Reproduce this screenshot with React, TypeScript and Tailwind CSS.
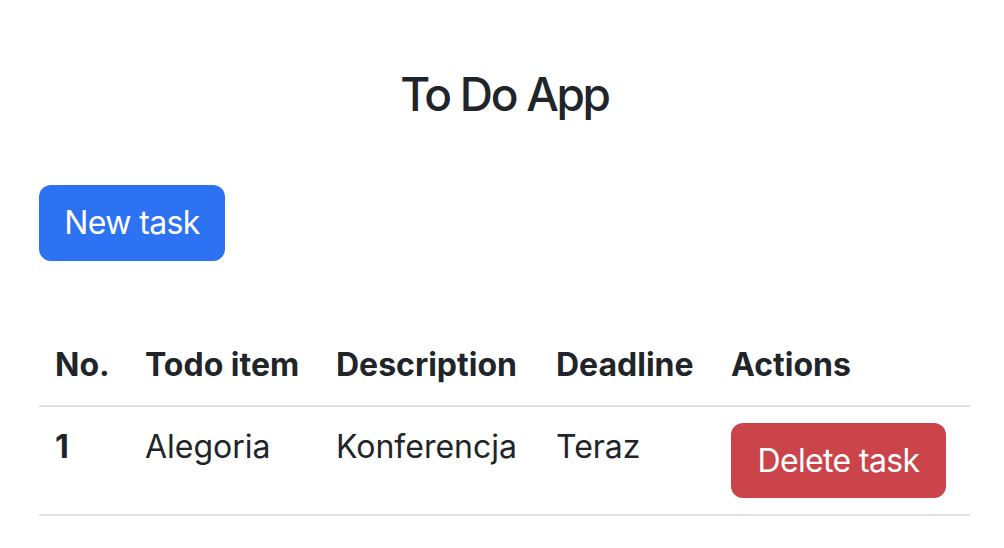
export default function App() {
  const font = { fontFamily: 'Inter, "Noto Sans", sans-serif' };
  return (
    <div className="min-h-[548px] w-full bg-white text-[#212529]" style={font}>
      <div className="ml-[39px] w-[931px] pt-[66px]">
        <h3 className="text-center text-[46px] font-medium leading-[57px] tracking-[-0.05em]">To Do App</h3>
        <button className="mt-[62px] h-[76px] w-[186px] rounded-[12px] bg-[#2c72f2] text-[32px] leading-[48px] tracking-[-0.02em] text-white">
          New task
        </button>
        <table className="mt-[64px] w-[931px] table-fixed border-collapse text-[32px] leading-[48px]">
          <colgroup>
            <col className="w-[90px]" />
            <col className="w-[191px]" />
            <col className="w-[220px]" />
            <col className="w-[175px]" />
            <col className="w-[255px]" />
          </colgroup>
          <thead>
            <tr className="border-b-2 border-[#dee2e6]">
              <th className="p-[16px] text-left align-bottom font-bold">No.</th>
              <th className="p-[16px] text-left align-bottom font-bold">Todo item</th>
              <th className="p-[16px] text-left align-bottom font-bold">Description</th>
              <th className="p-[16px] text-left align-bottom font-bold">Deadline</th>
              <th className="p-[16px] text-left align-bottom font-bold">Actions</th>
            </tr>
          </thead>
          <tbody>
            <tr className="border-b-2 border-[#dee2e6]">
              <th className="p-[16px] text-left align-top font-bold">1</th>
              <td className="p-[16px] align-top">Alegoria</td>
              <td className="p-[16px] align-top">Konferencja</td>
              <td className="p-[16px] align-top">Teraz</td>
              <td className="p-[16px] align-top">
                <button className="h-[75px] w-[215px] rounded-[12px] bg-[#cb444a] text-[32px] leading-[48px] tracking-[-0.02em] text-white">
                  Delete task
                </button>
              </td>
            </tr>
          </tbody>
        </table>
      </div>
    </div>
  );
}
